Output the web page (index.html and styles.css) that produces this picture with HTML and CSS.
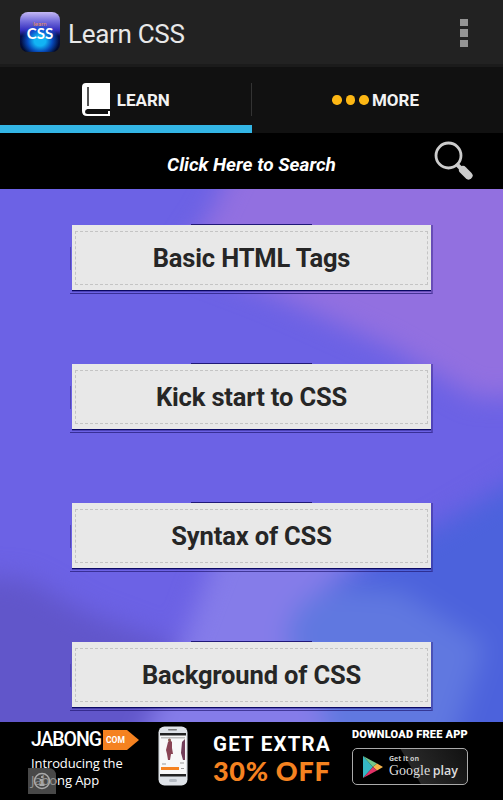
FILE: index.html
```html
<!DOCTYPE html>
<html lang="en">
<head>
  <meta charset="UTF-8">
  <meta name="viewport" content="width=device-width, initial-scale=1.0">
  <title>Learn CSS</title>
  <link rel="stylesheet" href="styles.css">
</head>
<body>
  <header class="header">
    <div class="logo"><span class="logo-small">learn</span><span class="logo-big">CSS</span></div>
    <h1 class="title">Learn CSS</h1>
    <div class="menu"><i></i><i></i><i></i></div>
  </header>

  <nav class="tabs">
    <a class="tab active" href="#">
      <svg class="book" width="28" height="34" viewBox="0 0 28 34">
        <path d="M4 0H28V26H5.500Q3 26.500 3 29Q3 31 5.500 31H26V28H28V33H5Q0 33 0 28V4Q0 0 4 0Z" fill="#fff"/>
        <path d="M6 4V23" stroke="#555" stroke-width="2"/>
      </svg>
      <span>LEARN</span>
    </a>
    <a class="tab" href="#">
      <span class="dots"><i></i><i></i><i></i></span>
      <span>MORE</span>
    </a>
  </nav>

  <div class="search">
    <span class="search-text">Click Here to Search</span>
    <svg class="search-icon" width="40" height="40" viewBox="0 0 40 40">
      <circle cx="14.500" cy="14.500" r="12.500" fill="none" stroke="#ccc" stroke-width="2.800"/>
      <path d="M22.500 23L27 27.500" stroke="#ccc" stroke-width="4"/>
      <path d="M29 29L34.500 34.500" stroke="#ccc" stroke-width="8" stroke-linecap="round"/>
    </svg>
  </div>

  <main class="content">
    <svg class="wallpaper" width="503" height="533" viewBox="0 0 503 533">
      <defs>
        <filter id="soft" x="-20%" y="-20%" width="140%" height="140%" color-interpolation-filters="sRGB"><feGaussianBlur stdDeviation="13"/></filter>
      </defs>
      <rect width="503" height="533" fill="#6c62e5"/>
      <g filter="url(#soft)">
        <path d="M245 -50L210 25L180 70L270 104L390 158L475 208L570 208V-50Z" fill="#9270e0"/>
        <path d="M-50 385L25 390L90 425L190 462L140 590H-50Z" fill="#6156ca"/>
        <path d="M222 350H360L380 590H125L180 460Z" fill="#857ce9"/>
        <path d="M570 260L440 335L345 385L300 420L340 590H570Z" fill="#4c62dc"/>
        <path d="M340 398L400 402L485 455L440 590H335L320 500L285 450L300 415Z" fill="#6078e0"/>
      </g>
    </svg>
    <a class="card" href="#"><span>Basic HTML Tags</span></a>
    <a class="card" href="#"><span>Kick start to CSS</span></a>
    <a class="card" href="#"><span>Syntax of CSS</span></a>
    <a class="card" href="#"><span>Background of CSS</span></a>
  </main>

  <footer class="ad">
    <div class="brand">
      <div class="brand-row"><span class="brand-name">JABONG</span><span class="brand-com">COM</span></div>
      <p class="brand-text">Introducing the<br>Jabong App</p>
      <svg class="info" width="28" height="26" viewBox="0 0 28 26">
        <path d="M0 0H20Q28 0 28 8V26H0Z" fill="#666" fill-opacity=".7"/>
        <circle cx="14" cy="13" r="7.500" fill="none" stroke="#aaa" stroke-width="1.500"/>
        <path d="M14 8V10M12 12H14V17M11.500 17H16.500" fill="none" stroke="#aaa" stroke-width="1.800"/>
      </svg>
    </div>
    <svg class="phone" width="30" height="60" viewBox="0 0 30 60">
      <rect x=".5" y=".5" width="29" height="59" rx="6" fill="#dfe3e8"/>
      <rect x="10" y="3" width="9" height="1.500" rx=".7" fill="#777"/>
      <rect x="2" y="7" width="26" height="43" fill="#f8f8f8"/>
      <rect x="2" y="7" width="26" height="2.500" fill="#222"/>
      <rect x="2" y="48" width="26" height="2.500" fill="#222"/>
      <rect x="3" y="11" width="24" height="1.500" fill="#bbb"/>
      <path d="M10 16L12 14L14 16L14 22L15 28H13L12 34H10L9 28L8 24Z" fill="#894454"/>
      <circle cx="11.500" cy="14" r="1.500" fill="#8c5b4d"/>
      <path d="M24 16L27 13V34H25L23 27Z" fill="#713d59"/>
      <rect x="3" y="41" width="18" height="3" fill="#f58220"/>
      <path d="M23 42.500H26M4 38H8M22 37H26" stroke="#999"/>
      <rect x="11" y="53" width="8" height="3" rx="1.500" fill="#b6bcc4"/>
    </svg>
    <div class="offer">
      <div class="offer-top">GET EXTRA</div>
      <div class="offer-big">30% OFF</div>
    </div>
    <div class="store">
      <div class="store-title">DOWNLOAD FREE APP</div>
      <div class="badge">
        <svg width="20" height="22" viewBox="0 0 20 22">
          <path d="M0 0L10 11L0 22Z" fill="#35b7c4"/>
          <path d="M0 0L14 7.500L10 11Z" fill="#72c78b"/>
          <path d="M14 7.500L20 11L14 14.500L10 11Z" fill="#f6b34b"/>
          <path d="M0 22L10 11L14 14.500Z" fill="#e33368"/>
        </svg>
        <div class="badge-text">
          <span class="badge-small">Get it on</span>
          <span class="badge-big"><b>Google</b> <em>play</em></span>
        </div>
      </div>
    </div>
  </footer>
</body>
</html>
```
FILE: styles.css
```css
* {
  margin: 0;
  padding: 0;
  box-sizing: border-box;
}

body {
  width: 503px;
  height: 800px;
  overflow: hidden;
  background: #000;
  font-family: Roboto, sans-serif;
}

a {
  color: inherit;
  text-decoration: none;
}

.header {
  display: flex;
  align-items: center;
  height: 67px;
  padding: 0 35px 0 20px;
  background: #222;
  border-bottom: 3px solid #1b1b1b;
}

.logo {
  display: flex;
  flex-direction: column;
  align-items: center;
  width: 40px;
  height: 40px;
  padding-top: 9px;
  border-radius: 8px;
  background:
    radial-gradient(ellipse 19px 17px at 50% 72%, #12b4f4 30%, rgba(8, 90, 220, 0.8) 65%, transparent 100%),
    linear-gradient(#c5b8f5 0, #7770dc 22%, #3530c0 45%, #04104c 60%, #020a28 100%);
}

.logo-small {
  font-size: 6px;
  line-height: 5px;
  color: #e89060;
}

.logo-big {
  padding-top: 1px;
  font: bold 15px/13px Lato, sans-serif;
  color: #fff;
}

.title {
  margin-left: 8px;
  font-size: 26px;
  font-weight: 400;
  line-height: 32px;
  letter-spacing: -0.3px;
  padding-top: 3px;
  color: #e8e8e8;
}

.menu {
  display: flex;
  flex-direction: column;
  gap: 3px;
  margin-left: auto;
  padding-top: 2px;
}

.menu i {
  width: 8px;
  height: 7.5px;
  background: #949494;
}

.tabs {
  display: flex;
  height: 66px;
  background: #111;
}

.tab {
  display: flex;
  width: 50%;
  align-items: center;
  justify-content: center;
  gap: 7px;
  padding-top: 8px;
  border-bottom: 8px solid transparent;
  font-size: 17px;
  font-weight: 700;
  color: #f3f3f3;
}

.tab.active {
  border-bottom-color: #33b5e5;
  /* short divider between the two tabs */
  background: linear-gradient(#333, #333) right 16px / 1px 33px no-repeat;
}

.dots {
  display: flex;
  gap: 4px;
}

.tab:last-child {
  gap: 3px;
  padding-right: 3px;
}

.dots i {
  width: 9.5px;
  height: 9.5px;
  border-radius: 50%;
  background: #fdb714;
}

.search {
  display: grid;
  grid-template-columns: 1fr auto 1fr;
  align-items: center;
  height: 56px;
  padding-right: 29px;
  padding-left: 29px;
  background: #000;
  color: #fff;
}

.search-text {
  grid-column: 2;
  padding-top: 7px;
  font-size: 19px;
  font-weight: 700;
  font-style: italic;
}

.search-icon {
  justify-self: end;
}

.content {
  position: relative;
  display: flex;
  flex-direction: column;
  align-items: center;
  gap: 74px;
  height: 533px;
  padding-top: 36px;
  overflow: hidden;
}

.wallpaper {
  position: absolute;
  inset: 0;
  height: 533px;
}

.card {
  position: relative;
  display: flex;
  flex: none;
  width: 359px;
  height: 65px;
  padding: 6px 3px 5px;
  background: #e8e8e8;
  box-shadow: 0 1px #0a0864, 0 2px rgba(20, 15, 100, 0.35);
}

.card span {
  display: flex;
  flex: 1;
  align-items: center;
  justify-content: center;
  border: 1px dashed #c4c4c4;
  font-size: 25.5px;
  font-weight: 700;
  letter-spacing: -0.15px;
  color: #262626;
}

/* shadow edges round the card */
.card::before {
  content: '';
  position: absolute;
  inset: -1px -2px -4px -2px;
  background:
    linear-gradient(#201878, #201878) 121px 0 / 121px 1px no-repeat,
    linear-gradient(#5046b4, #5046b4) 0 23px / 1px 23px no-repeat;
  border-right: 2px solid rgba(40, 25, 120, 0.4);
  border-bottom: 1px solid rgba(30, 20, 110, 0.65);
  clip-path: polygon(0 0, 361px 0, 361px 1px, 100% 1px, 100% 100%, 0 100%);
}

.ad {
  display: flex;
  height: 78px;
  background: #000;
  color: #fff;
}

.brand {
  position: relative;
  width: 127px;
  margin-left: 31px;
  padding-top: 8px;
}

.brand-row {
  display: flex;
  align-items: center;
  gap: 2px;
  height: 20px;
}

.brand-name {
  width: 70px;
  font: 500 19.5px/20px Roboto, sans-serif;
  letter-spacing: -1.1px;
}

.brand-com {
  width: 36px;
  height: 20px;
  padding-left: 3px;
  font-size: 8.5px;
  font-weight: 700;
  line-height: 20px;
  background: #f58220;
  clip-path: polygon(0 0, 24px 0, 100% 50%, 24px 100%, 0 100%);
}

.brand-text {
  padding-top: 5px;
  font: 13px/17px "Open Sans", sans-serif;
  letter-spacing: -0.1px;
  white-space: nowrap;
}

.info {
  position: absolute;
  left: -3px;
  bottom: 6px;
}

.phone {
  margin-top: 4px;
}

.offer {
  width: 138px;
  padding: 11px 0 0 25px;
  white-space: nowrap;
}

.offer-top {
  font: 700 20.5px/22px Roboto, sans-serif;
  letter-spacing: 1.2px;
}

.offer-big {
  padding-top: 3px;
  font: 900 27px/26px Lato, sans-serif;
  letter-spacing: 0.7px;
  color: #f58220;
}

.store {
  width: 118px;
  margin-left: 26px;
  padding-top: 7px;
  white-space: nowrap;
}

.store-title {
  font-size: 11px;
  font-weight: 900;
  line-height: 12px;
  letter-spacing: 0.2px;
}

.badge {
  display: flex;
  align-items: center;
  gap: 6px;
  width: 116px;
  height: 37px;
  margin-top: 7px;
  padding-left: 10px;
  border: 1px solid #aaa;
  border-radius: 5px;
  background: linear-gradient(60deg, #000 50%, #292929 51%, #111);
}

.badge-text {
  display: flex;
  flex-direction: column;
}

.badge-small {
  font: 700 7px/8px "Open Sans", sans-serif;
  color: #ccc;
}

.badge-big {
  font: 14px/16px "Liberation Serif", serif;
  color: #ddd;
}

.badge-big b {
  font-weight: 400;
}

.badge-big em {
  margin-left: -1px;
  font: 600 12.5px/16px "Open Sans", sans-serif;
}
```
